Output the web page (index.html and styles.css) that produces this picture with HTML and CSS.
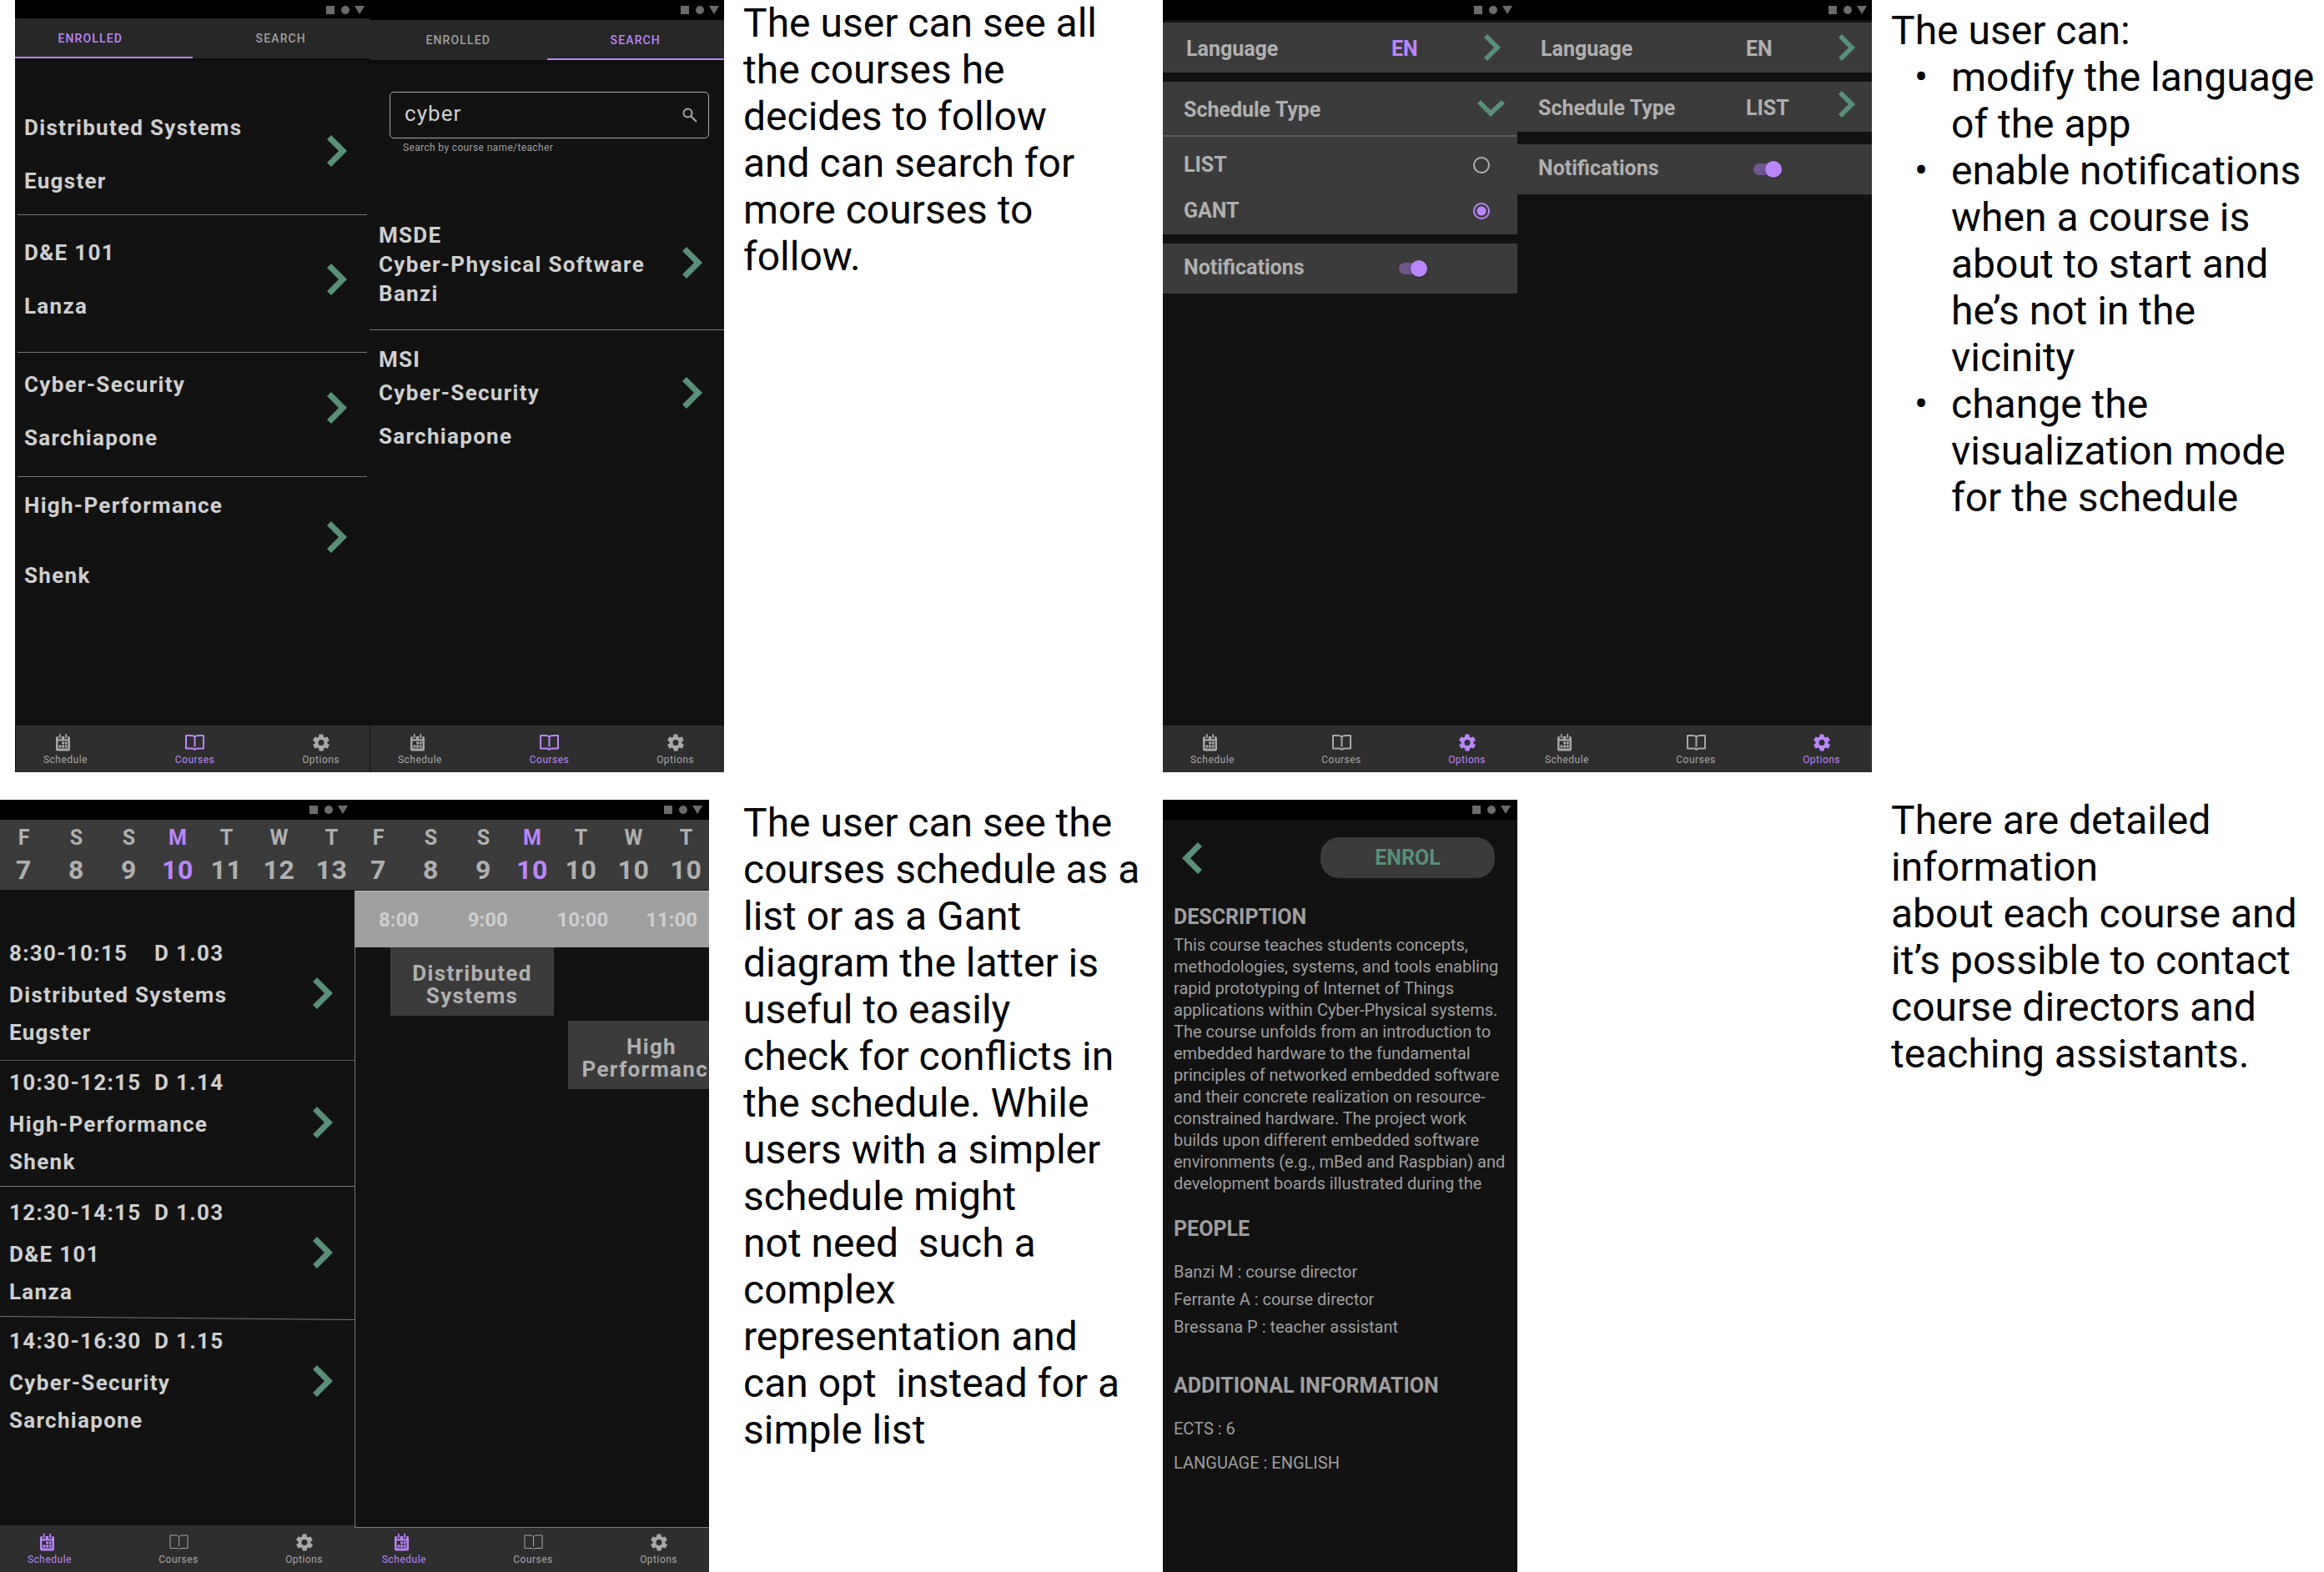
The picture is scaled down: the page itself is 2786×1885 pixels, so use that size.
FILE: index.html
```html
<!DOCTYPE html>
<html lang="en">
<head>
<meta charset="utf-8">
<title>Course app screens</title>
<meta name="viewport" content="width=device-width, initial-scale=1">
<link rel="stylesheet" href="styles.css">
</head>
<body>
<svg class="sprite" aria-hidden="true">
  <symbol id="status" viewBox="0 0 46 10"><path d="M0 0h10v10H0z"/><circle cx="23" cy="5" r="5"/><path d="M34 0h12l-6 10z"/></symbol>
  <symbol id="next" viewBox="0 0 24 38"><path d="M5 0l19 19L5 38l-5-5 14-14L0 5z"/></symbol>
  <symbol id="back" viewBox="0 0 24 38"><path d="M19 0L0 19l19 19 5-5-14-14L24 5z"/></symbol>
  <symbol id="next-small" viewBox="0 0 20 32"><path d="M4 0l16 16L4 32l-4-4 12-12L0 4z"/></symbol>
  <symbol id="down" viewBox="0 0 33 20"><path d="M0 4l16 16L33 4l-4-4-13 12L4 0z"/></symbol>
  <symbol id="calendar" viewBox="0 0 17 21"><path fill-rule="evenodd" d="M2 3h.8v3.200h4V3h3.400v3.200h4V3h.8a2 2 0 0 1 2 2v13.500a2 2 0 0 1-2 2H2a2 2 0 0 1-2-2V5a2 2 0 0 1 2-2zM2.500 8.500v9h12v-9z"/><path d="M3.900 0h1.800v5H3.900zM11.300 0h1.800v5h-1.800zM7.200 9.500h2.800v3H7.200zM10.800 9.500h2.800v3h-2.800zM3.500 13.500h2.900v3H3.500zM7.200 13.500h2.800v3H7.200zM10.800 13.500h2.800v3h-2.800z"/></symbol>
  <symbol id="book" viewBox="0 0 25 20"><path fill="none" stroke="currentColor" stroke-linejoin="round" d="M12.500 3Q11 1.500 8 1.500H2V17h8q1.500 0 2.500 1.500Q13.500 17 15 17h8V1.500h-6q-3 0-4.500 1.500zM12.500 3v12"/></symbol>
  <symbol id="gear" viewBox="2 2 20 20"><path d="M19.400 13a7.500 7.500 0 0 0 0-2l2.100-1.600a.5.500 0 0 0 .1-.7l-2-3.400a.5.500 0 0 0-.6-.2l-2.500 1a7.300 7.300 0 0 0-1.700-1l-.4-2.600a.5.500 0 0 0-.5-.5h-4a.5.500 0 0 0-.5.5L9.100 5.100a7.700 7.700 0 0 0-1.700 1l-2.500-1a.5.500 0 0 0-.6.200l-2 3.400a.5.500 0 0 0 .1.700L4.600 11a7.900 7.900 0 0 0 0 2l-2.100 1.600a.5.500 0 0 0-.1.700l2 3.400c.1.200.4.300.6.200l2.500-1c.5.400 1.100.7 1.700 1l.4 2.600c0 .3.200.5.500.5h4c.3 0 .5-.2.5-.5l.4-2.600a7.300 7.300 0 0 0 1.700-1l2.500 1c.2.100.5 0 .6-.2l2-3.400a.5.500 0 0 0-.1-.7zM12 15.500a3.500 3.500 0 1 1 0-7 3.500 3.500 0 0 1 0 7z"/></symbol>
  <symbol id="search" viewBox="0 0 18 18"><path fill="none" stroke="currentColor" stroke-width="2" d="M11.500 6.500a5 5 0 1 1-10 0 5 5 0 0 1 10 0zM10.500 10.500l6.500 6.500"/></symbol>
</svg>

<main class="board">
  <section class="panel panel--courses">
    <article class="phone phone--short">
      <div class="status"><svg><use href="#status"/></svg></div>
      <div class="tabs">
        <button class="tab tab--active tab--offset">ENROLLED</button>
        <button class="tab">SEARCH</button>
      </div>
      <ul class="courses">
        <li class="course course--first"><div class="course__text"><b>Distributed Systems</b><b>Eugster</b></div><svg class="chevron"><use href="#next"/></svg></li>
        <li class="course course--even"><div class="course__text"><b>D&amp;E 101</b><b>Lanza</b></div><svg class="chevron"><use href="#next"/></svg></li>
        <li class="course course--tight"><div class="course__text"><b>Cyber-Security</b><b>Sarchiapone</b></div><svg class="chevron"><use href="#next"/></svg></li>
        <li class="course course--last"><div class="course__text"><b>High-Performance</b><b>Shenk</b></div><svg class="chevron"><use href="#next"/></svg></li>
      </ul>
      <nav class="nav">
        <a class="nav__item" href="#schedule"><svg class="icon-calendar"><use href="#calendar"/></svg>Schedule</a>
        <a class="nav__item nav__item--active" href="#courses"><svg class="icon-book"><use href="#book"/></svg>Courses</a>
        <a class="nav__item" href="#options"><svg class="icon-gear"><use href="#gear"/></svg>Options</a>
      </nav>
    </article>

    <article class="phone">
      <div class="status"><svg><use href="#status"/></svg></div>
      <div class="tabs">
        <button class="tab">ENROLLED</button>
        <button class="tab tab--active">SEARCH</button>
      </div>
      <form class="search">
        <div class="search__box">
          <input id="query" type="text" value="cyber">
          <svg class="search__icon"><use href="#search"/></svg>
        </div>
        <label class="search__hint" for="query">Search by course name/teacher</label>
      </form>
      <ul class="results">
        <li class="result"><div class="result__text"><b>MSDE</b><b>Cyber-Physical Software</b><b>Banzi</b></div><svg class="chevron"><use href="#next"/></svg></li>
        <li class="result result--loose"><div class="result__text"><b>MSI</b><b>Cyber-Security</b><b>Sarchiapone</b></div><svg class="chevron"><use href="#next"/></svg></li>
      </ul>
      <nav class="nav">
        <a class="nav__item" href="#schedule"><svg class="icon-calendar"><use href="#calendar"/></svg>Schedule</a>
        <a class="nav__item nav__item--active" href="#courses"><svg class="icon-book"><use href="#book"/></svg>Courses</a>
        <a class="nav__item" href="#options"><svg class="icon-gear"><use href="#gear"/></svg>Options</a>
      </nav>
    </article>

    <div class="note note--courses">
      <p>The user can see all the courses he decides to follow and can search for more courses to follow.</p>
    </div>
  </section>

  <section class="panel panel--options">
    <article class="phone">
      <div class="status"><svg><use href="#status"/></svg></div>
      <div class="settings">
        <button class="setting setting--language"><span>Language</span><span class="setting__value setting__value--active">EN</span><svg class="chevron-small"><use href="#next-small"/></svg></button>
        <fieldset class="group">
          <button type="button" class="setting setting--open"><span>Schedule Type</span><svg class="chevron-down"><use href="#down"/></svg></button>
          <label class="choice">LIST<input type="radio" name="view"></label>
          <label class="choice">GANT<input type="radio" name="view" checked></label>
        </fieldset>
        <label class="setting setting--switch"><span>Notifications</span><input class="switch" type="checkbox" checked></label>
      </div>
      <nav class="nav">
        <a class="nav__item" href="#schedule"><svg class="icon-calendar"><use href="#calendar"/></svg>Schedule</a>
        <a class="nav__item" href="#courses"><svg class="icon-book"><use href="#book"/></svg>Courses</a>
        <a class="nav__item nav__item--active" href="#options"><svg class="icon-gear"><use href="#gear"/></svg>Options</a>
      </nav>
    </article>

    <article class="phone">
      <div class="status"><svg><use href="#status"/></svg></div>
      <div class="settings settings--closed">
        <button class="setting setting--language"><span>Language</span><span class="setting__value">EN</span><svg class="chevron-small"><use href="#next-small"/></svg></button>
        <button class="setting"><span>Schedule Type</span><span class="setting__value">LIST</span><svg class="chevron-small chevron-small--raised"><use href="#next-small"/></svg></button>
        <label class="setting setting--switch"><span>Notifications</span><input class="switch" type="checkbox" checked></label>
      </div>
      <nav class="nav">
        <a class="nav__item" href="#schedule"><svg class="icon-calendar"><use href="#calendar"/></svg>Schedule</a>
        <a class="nav__item" href="#courses"><svg class="icon-book"><use href="#book"/></svg>Courses</a>
        <a class="nav__item nav__item--active" href="#options"><svg class="icon-gear"><use href="#gear"/></svg>Options</a>
      </nav>
    </article>

    <div class="note note--options">
      <p>The user can:</p>
      <ul>
        <li>modify the language of the app</li>
        <li>enable notifications when a course is about to start and he’s not in the vicinity</li>
        <li>change the visualization mode for the schedule</li>
      </ul>
    </div>
  </section>

  <section class="panel panel--schedule">
    <article class="phone">
      <div class="status"><svg><use href="#status"/></svg></div>
      <div class="days">
        <button class="day">F<b>7</b></button>
        <button class="day">S<b>8</b></button>
        <button class="day">S<b>9</b></button>
        <button class="day day--active">M<b>10</b></button>
        <button class="day">T<b>11</b></button>
        <button class="day">W<b>12</b></button>
        <button class="day">T<b>13</b></button>
      </div>
      <ul class="lessons">
        <li class="lesson lesson--first"><div><p class="lesson__time"><time>8:30-10:15</time><span>D 1.03</span></p><p class="lesson__name">Distributed Systems</p><p class="lesson__teacher">Eugster</p></div><svg class="chevron"><use href="#next"/></svg></li>
        <li class="lesson lesson--second"><div><p class="lesson__time"><time>10:30-12:15</time><span>D 1.14</span></p><p class="lesson__name">High-Performance</p><p class="lesson__teacher">Shenk</p></div><svg class="chevron"><use href="#next"/></svg></li>
        <li class="lesson lesson--third"><div><p class="lesson__time"><time>12:30-14:15</time><span>D 1.03</span></p><p class="lesson__name">D&amp;E 101</p><p class="lesson__teacher">Lanza</p></div><svg class="chevron"><use href="#next"/></svg></li>
        <li class="lesson"><svg class="slant" viewBox="0 0 425 5" preserveAspectRatio="none"><path d="M0 .5L425 4.500"/></svg><div><p class="lesson__time"><time>14:30-16:30</time><span>D 1.15</span></p><p class="lesson__name">Cyber-Security</p><p class="lesson__teacher">Sarchiapone</p></div><svg class="chevron"><use href="#next"/></svg></li>
      </ul>
      <nav class="nav">
        <a class="nav__item nav__item--active" href="#schedule"><svg class="icon-calendar"><use href="#calendar"/></svg>Schedule</a>
        <a class="nav__item" href="#courses"><svg class="icon-book"><use href="#book"/></svg>Courses</a>
        <a class="nav__item" href="#options"><svg class="icon-gear"><use href="#gear"/></svg>Options</a>
      </nav>
    </article>

    <article class="phone">
      <div class="status"><svg><use href="#status"/></svg></div>
      <div class="days">
        <button class="day">F<b>7</b></button>
        <button class="day">S<b>8</b></button>
        <button class="day">S<b>9</b></button>
        <button class="day day--active">M<b>10</b></button>
        <button class="day">T<b>10</b></button>
        <button class="day">W<b>10</b></button>
        <button class="day">T<b>10</b></button>
      </div>
      <div class="gantt">
        <div class="hours"><span>8:00</span><span>9:00</span><span>10:00</span><span>11:00</span></div>
        <div class="block block--early">Distributed<br>Systems</div>
        <div class="block block--late">High<br>Performance</div>
      </div>
      <nav class="nav nav--gantt">
        <a class="nav__item nav__item--active" href="#schedule"><svg class="icon-calendar"><use href="#calendar"/></svg>Schedule</a>
        <a class="nav__item" href="#courses"><svg class="icon-book"><use href="#book"/></svg>Courses</a>
        <a class="nav__item" href="#options"><svg class="icon-gear"><use href="#gear"/></svg>Options</a>
      </nav>
    </article>

    <div class="note note--schedule">
      <p>The user can see the courses schedule as a list or as a Gant diagram the latter is useful to easily<br>check for conflicts in the schedule. While users with a simpler schedule might<br>not need&nbsp; such a complex representation and can opt&nbsp; instead for a simple list</p>
    </div>
  </section>

  <section class="panel panel--detail">
    <article class="phone">
      <div class="status"><svg><use href="#status"/></svg></div>
      <div class="detail">
        <header class="detail__bar">
          <a href="#courses" aria-label="Back"><svg class="detail__back"><use href="#back"/></svg></a>
          <button class="enrol">ENROL</button>
        </header>
        <h2>DESCRIPTION</h2>
        <p class="detail__about">This course teaches students concepts, methodologies, systems, and tools enabling rapid prototyping of Internet of Things applications within Cyber-Physical systems. The course unfolds from an introduction to embedded hardware to the fundamental principles of networked embedded software and their concrete realization on resource-constrained hardware. The project work builds upon different embedded software environments (e.g., mBed and Raspbian) and development boards illustrated during the</p>
        <h2>PEOPLE</h2>
        <ul class="people">
          <li>Banzi M : course director</li>
          <li>Ferrante A : course director</li>
          <li>Bressana P : teacher assistant</li>
        </ul>
        <h2>ADDITIONAL INFORMATION</h2>
        <ul class="facts">
          <li>ECTS : 6</li>
          <li>LANGUAGE : ENGLISH</li>
        </ul>
      </div>
    </article>

    <div class="note note--detail">
      <p>There are detailed information<br>about each course and it’s possible to contact course directors and teaching assistants.</p>
    </div>
  </section>
</main>
</body>
</html>
```
FILE: styles.css
```css
:root {
  --surface: #121212;
  --bar: #2e2e2e;
  --card: #3b3b3b;
  --line: #7a7a7a;
  --text: #cfcfcf;
  --muted: #b0b0b0;
  --accent: #bb86fc;
  --green: #58907a;
}

* { box-sizing: border-box; }

body {
  margin: 0;
  background: #fff;
  color: #000;
  font-family: Roboto, "Liberation Sans", sans-serif;
}

ul, p, h2 { margin: 0; padding: 0; }
ul { list-style: none; }
svg { display: block; fill: currentColor; }
b { font-weight: 700; }
button {
  border: 0;
  padding: 0;
  margin: 0;
  background: none;
  color: inherit;
  font: inherit;
}
.sprite { position: absolute; width: 0; height: 0; }

/* Board */
.board {
  display: grid;
  grid-template-columns: minmax(0, 1394fr) minmax(0, 1392fr);
  grid-template-rows: 1fr 1fr;
  row-gap: 33px;
  min-height: 100vh;
}
.panel { display: grid; }
.panel--courses {
  padding-left: 18px;
  grid-template-columns: minmax(0, 425fr) minmax(0, 425fr) minmax(0, 526fr);
}
.panel--options,
.panel--detail { grid-template-columns: minmax(0, 425fr) minmax(0, 425fr) minmax(0, 542fr); }
.panel--schedule { grid-template-columns: minmax(0, 425fr) minmax(0, 425fr) minmax(0, 544fr); }

/* Notes */
.note { font-size: 48px; line-height: 56px; }
.note--courses { padding-left: 23px; }
.note--courses p { max-width: 440px; }
.note--options { padding: 9px 6px 0 23px; }
.note--options ul { padding-left: 72px; }
.note--options li { position: relative; }
.note--options li::before { content: "•"; position: absolute; left: -44px; }
.note--schedule { padding-left: 41px; }
.note--schedule p { max-width: 480px; }
.note--detail { grid-column: 3; margin-top: -3px; padding: 0 6px 0 23px; }

/* Phone shell */
.phone {
  display: flex;
  flex-direction: column;
  overflow: hidden;
  background: var(--surface);
  color: var(--text);
  font-size: 26px;
}
.status {
  display: flex;
  justify-content: flex-end;
  height: 24px;
  padding: 7px 6px 0;
  background: #000;
  color: #6b6b6b;
}
.phone--short .status { height: 22px; }
.panel--schedule .status,
.panel--detail .status { padding-right: 8px; }
.status svg { width: 46px; height: 10px; }

.nav {
  display: flex;
  justify-content: space-between;
  height: 56px;
  margin-top: auto;
  padding: 10px 38px 0 33px;
  background: var(--bar);
}
.panel--courses .nav { border-left: 1px solid #121212; padding-right: 36px; }
.nav__item {
  display: flex;
  flex-direction: column;
  align-items: center;
  color: #a8a8a8;
  font-size: 12px;
  line-height: 16px;
  letter-spacing: 0.04em;
  text-decoration: none;
}
.nav__item svg { height: 21px; margin-bottom: 2px; }
.nav__item--active { color: var(--accent); }
.nav--gantt { height: 53px; padding-top: 7px; }
.nav .icon-calendar { width: 17px; margin-right: 5px; }
.icon-book { width: 25px; stroke-width: 2px; }
.panel--schedule .icon-book { stroke-width: 1px; }
.icon-gear { width: 20px; }

.chevron { flex: none; width: 24px; height: 38px; color: var(--green); }
.chevron-small { width: 20px; height: 32px; margin-right: 5px; color: var(--green); }
.chevron-small--raised { margin-bottom: 6px; }
.chevron-down { width: 33px; height: 20px; color: var(--green); }

/* Course tabs */
.tabs {
  display: grid;
  grid-template-columns: 1fr 1fr;
  height: 48px;
  background: #272727;
  box-shadow: 0 2px 4px rgba(0, 0, 0, 0.4);
}
.tab {
  padding-top: 2px;
  border-bottom: 2px solid transparent;
  color: #a0a0a0;
  font-size: 14px;
  font-weight: 500;
  letter-spacing: 0.08em;
}
.tab--active { border-color: var(--accent); color: var(--accent); }
.tab--offset { padding-right: 32px; }

/* Enrolled courses */
.courses { padding: 0 3px; }
.course {
  display: flex;
  justify-content: space-between;
  align-items: center;
  padding: 13px 24px 23px 8px;
  border-bottom: 1px solid var(--line);
  line-height: 64px;
  letter-spacing: 0.05em;
}
.course__text { display: flex; flex-direction: column; }
.course .chevron { margin-bottom: 8px; }
.course--even .chevron { margin-bottom: 0; }
.course--first { padding-top: 51px; padding-bottom: 8px; }
.course--tight { padding-top: 6px; padding-bottom: 14px; }
.course--last { padding-top: 2px; border-bottom: 0; }
.course--last .course__text { gap: 20px; }

/* Course search */
.search { padding: 38px 18px 0 24px; }
.search__box {
  display: flex;
  align-items: center;
  height: 56px;
  padding: 0 13px 0 17px;
  border: 1px solid #a8a8a8;
  border-radius: 5px;
}
.search__box input {
  flex: 1;
  min-width: 0;
  padding: 0 0 4px;
  border: 0;
  outline: 0;
  background: none;
  color: var(--text);
  font: 26px Roboto, sans-serif;
  letter-spacing: 0.04em;
}
.search__icon { width: 18px; height: 18px; color: #a8a8a8; }
.search__hint {
  display: block;
  padding: 3px 0 0 16px;
  color: #a0a0a0;
  font-size: 12px;
  line-height: 16px;
  letter-spacing: 0.03em;
}
.results { padding-top: 80px; }
.result {
  display: flex;
  justify-content: space-between;
  padding: 0 26px 25px 11px;
  border-bottom: 1px solid var(--line);
  line-height: 35px;
  letter-spacing: 0.05em;
}
.result__text { display: flex; flex-direction: column; }
.result .chevron { margin-top: 31px; }
.result--loose { padding-top: 15px; border-bottom: 0; line-height: 40px; }
.result--loose b:last-child { margin-top: 12px; }
.result--loose .chevron { margin-top: 41px; }

/* Options */
.settings {
  display: flex;
  flex-direction: column;
  gap: 11px;
  padding-top: 3px;
  color: var(--muted);
  font-size: 25px;
  font-weight: 700;
}
.settings--closed { gap: 15px; }
.settings--closed .setting--language { margin-bottom: -4px; }
.setting {
  display: grid;
  grid-template-columns: 249px 1fr auto;
  align-items: center;
  height: 60px;
  padding: 0 15px 0 25px;
  background: var(--card);
  text-align: left;
}
.setting span { padding-top: 2px; }
.setting--language { grid-template-columns: 246px 1fr auto; padding-left: 28px; }
.setting--switch span { padding: 0 0 4px; }
.setting__value--active { color: var(--accent); }
.group { margin: 0; padding: 0 0 7px; border: 0; background: var(--card); }
.setting--open {
  grid-template-columns: 1fr auto;
  width: 100%;
  height: 66px;
  border-bottom: 2px solid #5a5a5a;
}
.choice {
  display: flex;
  justify-content: space-between;
  align-items: center;
  height: 55px;
  padding: 12px 33px 0 25px;
}
.choice input {
  appearance: none;
  width: 20px;
  height: 20px;
  margin: 0;
  border: 2px solid var(--muted);
  border-radius: 50%;
}
.choice input:checked {
  border-color: var(--accent);
  background: radial-gradient(circle, var(--accent) 5px, transparent 6px);
}
.switch {
  appearance: none;
  position: relative;
  width: 34px;
  height: 14px;
  margin: 0 0 0 9px;
  border-radius: 7px;
  background: #6f578e;
}
.switch::before {
  content: "";
  position: absolute;
  top: -3px;
  right: 0;
  width: 20px;
  height: 20px;
  border-radius: 50%;
  background: var(--accent);
  box-shadow: 0 1px 2px rgba(0, 0, 0, 0.4);
}

/* Schedule */
.days {
  display: grid;
  grid-template-columns: repeat(3, 63fr) 54fr repeat(3, 63fr);
  height: 84px;
  margin: 0 -4px 0 -3px;
  background: var(--card);
  color: var(--muted);
}
.day {
  display: flex;
  flex-direction: column;
  align-items: center;
  padding-top: 7px;
  font-size: 25px;
  font-weight: 700;
  line-height: 30px;
}
.day b { font-size: 32px; line-height: 46px; letter-spacing: 0.02em; }
.day--active { color: var(--accent); }
.lesson {
  display: flex;
  flex-wrap: wrap;
  justify-content: space-between;
  align-items: center;
  padding: 0 26px 0 11px;
  font-weight: 700;
  line-height: 50px;
  letter-spacing: 0.05em;
}
.lesson--first { padding-top: 51px; padding-bottom: 13px; border-bottom: 1px solid #5c5c5c; }
.lesson--second { padding-top: 1px; padding-bottom: 9px; border-bottom: 1px solid var(--line); }
.lesson--third { padding-top: 6px; padding-bottom: 9px; }
.lesson__time { display: flex; white-space: nowrap; }
.lesson__time time { width: 174px; }
.lesson__teacher { line-height: 40px; }
.lesson .chevron { margin-top: 6px; }
.slant {
  flex: none;
  width: calc(100% + 37px);
  height: 5px;
  margin: 0 -26px 0 -11px;
  fill: none;
  stroke: var(--line);
}

/* Gantt */
.gantt {
  flex: 1;
  margin-top: 1px;
  border: 1px solid var(--line);
  border-width: 0 0 1px 1px;
}
.hours {
  display: grid;
  grid-template-columns: 107fr 107fr 107fr 76fr;
  height: 68px;
  margin-left: -1px;
  padding: 2px 0 0 29px;
  border-top: 1px solid #c4c4c4;
  background: #9f9f9f;
  font-size: 24px;
  font-weight: 700;
  line-height: 65px;
  white-space: nowrap;
}
.block {
  width: 196px;
  height: 82px;
  padding-top: 18px;
  background: var(--card);
  color: var(--muted);
  font-weight: 700;
  line-height: 27px;
  letter-spacing: 0.05em;
  text-align: center;
}
.block--early { margin-left: 42px; }
.block--late { width: 200px; margin: 6px 0 0 255px; }

/* Course detail */
.detail {
  padding: 21px 12px 0 13px;
  color: #9f9f9f;
  font-size: 20px;
}
.detail__bar {
  display: flex;
  justify-content: space-between;
  align-items: center;
  margin-bottom: 31px;
  padding: 0 15px 0 10px;
}
.detail__back { width: 24px; height: 38px; color: var(--green); }
.enrol {
  width: 209px;
  height: 49px;
  border-radius: 22px;
  background: var(--card);
  color: var(--green);
  font-size: 25px;
  font-weight: 700;
}
.detail h2 { font-size: 25px; font-weight: 700; line-height: 32px; }
.detail__about { margin: 4px 0 26px; line-height: 26px; }
.people { margin: 19px 0 38px; line-height: 33px; }
.facts { margin-top: 15px; line-height: 41px; }
```
